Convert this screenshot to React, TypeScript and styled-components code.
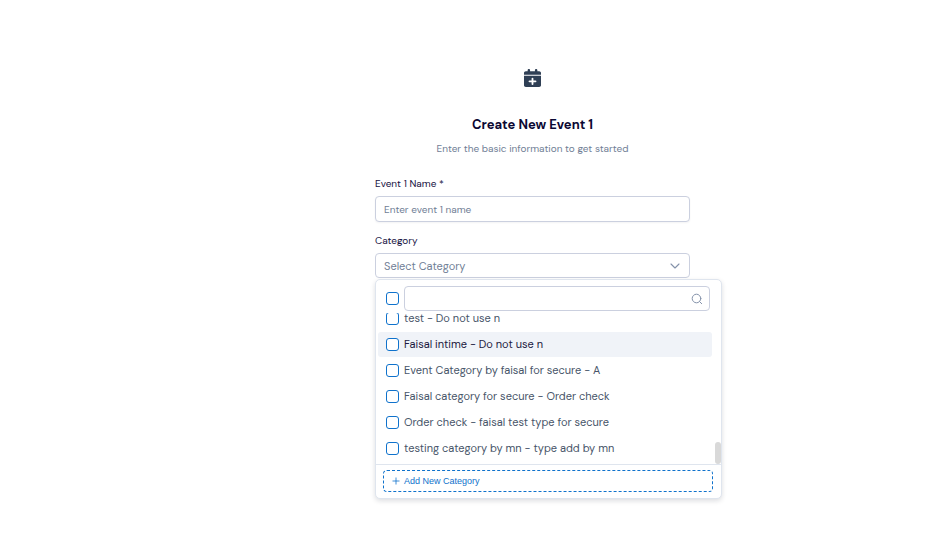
import React, { useLayoutEffect, useRef, useState } from "react";
import styled, { createGlobalStyle } from "styled-components";

const GlobalStyle = createGlobalStyle`
  *, *::before, *::after { box-sizing: border-box; }
  body {
    margin: 0;
    background: #ffffff;
    font-family: "DM Sans", Inter, sans-serif;
  }
`;

const Page = styled.main`
  display: flex;
  justify-content: center;
  min-height: 100vh;
  padding: 69px 0 60px 113px;
`;

const Form = styled.form`
  display: flex;
  flex-direction: column;
  width: 100%;
  max-width: 315px;
`;

const Header = styled.header`
  display: flex;
  flex-direction: column;
  align-items: center;
  margin-bottom: 19px;
`;

const Title = styled.h1`
  margin: 28px 0 0;
  font-size: 13px;
  line-height: 20px;
  font-weight: 700;
  color: #0b0833;
`;

const Subtitle = styled.p`
  margin: 6px 0 0;
  font-size: 10px;
  line-height: 16px;
  color: #718096;
`;

const Field = styled.div`
  position: relative;
  display: flex;
  flex-direction: column;
  margin-bottom: 11px;
`;

const Label = styled.label`
  margin-bottom: 4px;
  font-size: 10px;
  line-height: 16px;
  color: #17123f;
`;

const TextInput = styled.input`
  width: 100%;
  height: 26px;
  padding: 0 8px;
  border: 1px solid #cbd0df;
  border-radius: 4px;
  background: #ffffff;
  box-shadow: 0 1px 2px rgba(16, 24, 40, 0.05);
  font: inherit;
  font-size: 10px;
  color: #17123f;
  outline: none;

  &::placeholder { color: #718096; opacity: 1; }
`;

const SelectButton = styled.button`
  display: flex;
  align-items: center;
  justify-content: space-between;
  width: 100%;
  height: 25px;
  padding: 0 8px;
  border: 1px solid #cbd0df;
  border-radius: 4px;
  background: #ffffff;
  font: inherit;
  font-size: 11px;
  color: #718096;
`;

const Panel = styled.div`
  position: absolute;
  top: 100%;
  left: 0;
  width: 347px;
  margin-top: 1px;
  border: 1px solid #dfe5ee;
  border-radius: 5px;
  background: #ffffff;
  box-shadow: 0 2px 5px rgba(16, 24, 40, 0.14);
`;

const PanelHeader = styled.div`
  display: flex;
  align-items: center;
  gap: 5px;
  padding: 6px 11px 2px 10px;
`;

const SearchBox = styled.div`
  display: flex;
  flex: 1;
  align-items: center;
  height: 25px;
  padding: 0 6px 0 8px;
  border: 1px solid #cbd0df;
  border-radius: 4px;
`;

const SearchInput = styled.input`
  flex: 1;
  min-width: 0;
  border: 0;
  padding: 0;
  background: transparent;
  font: inherit;
  font-size: 11px;
  outline: none;
`;

const Checkbox = styled.input`
  flex: none;
  appearance: none;
  width: 13px;
  height: 13px;
  margin: 0;
  border: 1px solid #0f72cc;
  border-radius: 3px;
  background: #ffffff;

  &:checked { background: #0f72cc; }
`;

const ListArea = styled.div`
  position: relative;
`;

const List = styled.ul`
  display: flex;
  flex-direction: column;
  gap: 1px;
  max-height: 151px;
  margin: 0;
  padding: 0 9px 3px 2px;
  overflow-y: auto;
  scrollbar-width: none;
  list-style: none;
`;

const Option = styled.li`
  flex: none;
`;

const OptionLabel = styled.label<{ $active: boolean }>`
  display: flex;
  align-items: center;
  gap: 5px;
  height: 25px;
  padding: 0 8px;
  border-radius: 3px;
  background: ${(p) => (p.$active ? "#f0f3f8" : "transparent")};
  color: ${(p) => (p.$active ? "#1c1940" : "#475569")};
  font-size: 11px;
  white-space: nowrap;
`;

const OptionText = styled.span`
  line-height: 12px;
  margin-bottom: 2px;
`;

const ScrollThumb = styled.div`
  position: absolute;
  right: 0;
  bottom: 0;
  width: 6px;
  height: 22px;
  border-radius: 3px;
  background: #d9d9d9;
`;

const PanelFooter = styled.div`
  padding: 5px 8px 6px 7px;
  border-top: 1px solid #dfe5ee;
`;

const AddButton = styled.button`
  display: flex;
  align-items: center;
  gap: 4px;
  width: 100%;
  height: 22px;
  padding: 0 8px;
  border: 1px dashed #0f72cc;
  border-radius: 4px;
  background: #ffffff;
  font-family: "Liberation Sans", Arial, sans-serif;
  font-size: 9px;
  color: #0f72cc;
`;

const Icon = styled.svg`
  display: block;
  flex: none;
`;

const categories = [
  "test - Do not use n",
  "Faisal intime - Do not use n",
  "Event Category by faisal for secure - A",
  "Faisal category for secure - Order check",
  "Order check - faisal test type for secure",
  "testing category by mn - type add by mn",
];

function CalendarPlusIcon() {
  return (
    <Icon width="17" height="18" viewBox="0 0 448 512" preserveAspectRatio="none" fill="#2f3f55" aria-hidden="true">
      <path d="M96 32V64H48C21.500 64 0 85.500 0 112v48h448v-48c0-26.500-21.500-48-48-48h-48V32c0-17.700-14.300-32-32-32s-32 14.300-32 32v32H160V32c0-17.700-14.300-32-32-32S96 14.300 96 32zM448 192H0v272c0 26.500 21.500 48 48 48h352c26.500 0 48-21.500 48-48V192zM224 248c13.300 0 24 10.700 24 24v56h56c13.300 0 24 10.700 24 24s-10.700 24-24 24h-56v56c0 13.300-10.700 24-24 24s-24-10.700-24-24v-56h-56c-13.300 0-24-10.700-24-24s10.700-24 24-24h56v-56c0-13.300 10.700-24 24-24z" />
    </Icon>
  );
}

export default function App() {
  const [open, setOpen] = useState(true);
  const [query, setQuery] = useState("");
  const listRef = useRef<HTMLUListElement>(null);
  const shown = categories.filter((c) => c.toLowerCase().includes(query.toLowerCase()));

  useLayoutEffect(() => {
    if (listRef.current) listRef.current.scrollTop = listRef.current.scrollHeight;
  }, [open]);

  return (
    <>
      <GlobalStyle />
      <Page>
        <Form>
          <Header>
            <CalendarPlusIcon />
            <Title>Create New Event 1</Title>
            <Subtitle>Enter the basic information to get started</Subtitle>
          </Header>

          <Field>
            <Label htmlFor="event-name">Event 1 Name *</Label>
            <TextInput id="event-name" type="text" placeholder="Enter event 1 name" />
          </Field>

          <Field>
            <Label htmlFor="category">Category</Label>
            <SelectButton
              id="category"
              type="button"
              aria-haspopup="true"
              aria-expanded={open}
              onClick={() => setOpen(!open)}
            >
              Select Category
              <Icon width="12" height="12" viewBox="0 0 12 12" fill="none" stroke="#8492aa" strokeWidth="1.1" strokeLinecap="round" strokeLinejoin="round" aria-hidden="true">
                <path d="M2 4 6 8 10 4" />
              </Icon>
            </SelectButton>

            {open && (
              <Panel>
                <PanelHeader>
                  <Checkbox type="checkbox" aria-label="Select all categories" />
                  <SearchBox>
                    <SearchInput
                      type="text"
                      aria-label="Search categories"
                      value={query}
                      onChange={(e) => setQuery(e.target.value)}
                    />
                    <Icon width="12" height="12" viewBox="0 0 12 12" fill="none" stroke="#8492aa" strokeWidth="1" strokeLinecap="round" aria-hidden="true">
                      <circle cx="5.500" cy="5.500" r="4.300" />
                      <path d="m8.700 8.700 2 2" />
                    </Icon>
                  </SearchBox>
                </PanelHeader>
                <ListArea>
                  <List ref={listRef}>
                    {shown.map((name) => (
                      <Option key={name}>
                        <OptionLabel $active={name === categories[1]}>
                          <Checkbox type="checkbox" />
                          <OptionText>{name}</OptionText>
                        </OptionLabel>
                      </Option>
                    ))}
                  </List>
                  <ScrollThumb />
                </ListArea>
                <PanelFooter>
                  <AddButton type="button">
                    <Icon width="8" height="8" viewBox="0 0 8 8" fill="none" stroke="#0f72cc" strokeWidth="0.8" aria-hidden="true">
                      <path d="M4 .5v7M.5 4h7" />
                    </Icon>
                    Add New Category
                  </AddButton>
                </PanelFooter>
              </Panel>
            )}
          </Field>
        </Form>
      </Page>
    </>
  );
}
